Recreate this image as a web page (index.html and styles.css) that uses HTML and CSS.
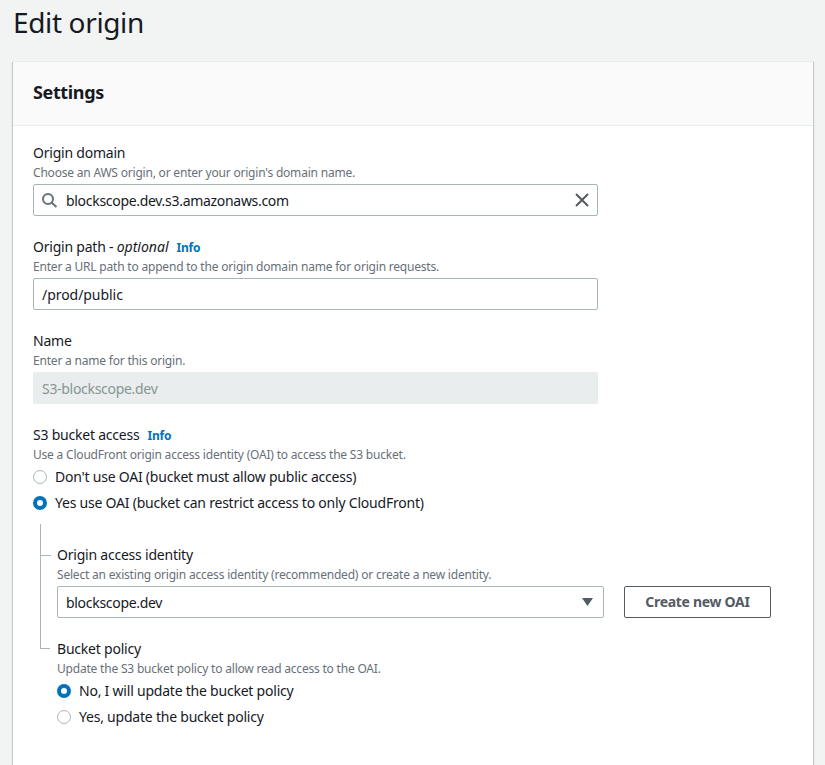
FILE: index.html
```html
<!DOCTYPE html>
<html lang="en">
<head>
    <meta charset="UTF-8">
    <meta name="viewport" content="width=device-width, initial-scale=1.0">
    <title>Edit origin</title>
    <link rel="stylesheet" href="styles.css">
</head>
<body>
    <h1 class="page-title">Edit origin</h1>
    <div class="card">
        <div class="card-header">
            <h2>Settings</h2>
        </div>
        <form class="card-body">
            <div class="field">
                <label class="field-label" for="originDomain">Origin domain</label>
                <p class="field-desc">Choose an AWS origin, or enter your origin's domain name.</p>
                <div class="input-box search-box">
                    <svg class="icon" width="16" height="16" viewBox="0 0 16 16" fill="none" stroke="#687078" stroke-width="2">
                        <circle cx="6" cy="7" r="5"/>
                        <path d="M9.5 10.5L14.5 15"/>
                    </svg>
                    <input type="text" id="originDomain" value="blockscope.dev.s3.amazonaws.com">
                    <svg class="icon" width="16" height="16" viewBox="0 0 16 16" fill="none" stroke="#545b64" stroke-width="2">
                        <path d="M2 2L14 14M14 2L2 14"/>
                    </svg>
                </div>
            </div>

            <div class="field">
                <label class="field-label" for="originPath">Origin path - <i>optional</i><a class="info-link" href="#">Info</a></label>
                <p class="field-desc">Enter a URL path to append to the origin domain name for origin requests.</p>
                <div class="input-box path-box">
                    <input type="text" id="originPath" value="/prod/public">
                </div>
            </div>

            <div class="field">
                <label class="field-label" for="originName">Name</label>
                <p class="field-desc">Enter a name for this origin.</p>
                <div class="input-box is-disabled">
                    <input type="text" id="originName" value="S3-blockscope.dev" disabled>
                </div>
            </div>

            <div class="field">
                <div class="field-label">S3 bucket access<a class="info-link" href="#">Info</a></div>
                <p class="field-desc">Use a CloudFront origin access identity (OAI) to access the S3 bucket.</p>
                <label class="radio-row"><input type="radio" name="access"> Don't use OAI (bucket must allow public access)</label>
                <label class="radio-row"><input type="radio" name="access" checked> Yes use OAI (bucket can restrict access to only CloudFront)</label>

                <div class="tree">
                    <div class="tree-row tree-row-first">
                        <div class="tree-line"><div class="tree-stub"></div></div>
                        <div class="tree-content">
                            <label class="field-label" for="oai">Origin access identity</label>
                            <p class="field-desc">Select an existing origin access identity (recommended) or create a new identity.</p>
                            <div class="select-row">
                                <div class="input-box select-box">
                                    <span class="select-value" id="oai">blockscope.dev</span>
                                    <svg width="11" height="8" viewBox="0 0 11 8"><path d="M0 0H11L5.5 8Z" fill="#545b64"/></svg>
                                </div>
                                <button type="button" class="btn">Create new OAI</button>
                            </div>
                        </div>
                    </div>
                    <div class="tree-row tree-row-last">
                        <div class="tree-line"><div class="tree-stub"></div></div>
                        <div class="tree-content">
                            <div class="field-label">Bucket policy</div>
                            <p class="field-desc">Update the S3 bucket policy to allow read access to the OAI.</p>
                            <label class="radio-row"><input type="radio" name="policy" checked> No, I will update the bucket policy</label>
                            <label class="radio-row"><input type="radio" name="policy"> Yes, update the bucket policy</label>
                        </div>
                    </div>
                </div>
            </div>
        </form>
    </div>
</body>
</html>
```

FILE: styles.css
```css
body {
    font-family: "Noto Sans", Arial, sans-serif;
    font-size: 14px;
    line-height: 22px;
    letter-spacing: -0.22px;
    color: #16191f;
    background-color: #f2f3f3;
    margin: 0;
    padding: 0 12px 0 13px;
    height: 765px;
    overflow: hidden;
}

.page-title {
    font-size: 28px;
    font-weight: 400;
    line-height: 36px;
    letter-spacing: -0.36px;
    margin: 0;
    padding: 4px 0 21px 0;
}

.card {
    background-color: #fff;
    box-shadow: 0 1px 1px 0 rgba(0, 28, 36, 0.3), 1px 1px 1px 0 rgba(0, 28, 36, 0.15), -1px 1px 1px 0 rgba(0, 28, 36, 0.15);
    border-top: 1px solid #eaeded;
    padding-bottom: 60px;
}

.card-header {
    background-color: #fafafa;
    border-bottom: 1px solid #eaeded;
    padding: 18px 20px 21px;
}

.card-header h2 {
    font-size: 18px;
    font-weight: 700;
    line-height: 24px;
    letter-spacing: -0.37px;
    margin: 0;
}

.card-body {
    padding: 16px 20px 0;
}

.field {
    margin-bottom: 20px;
}

.field-label {
    display: block;
    height: 23px;
}

.field-label i {
    letter-spacing: 0;
}

.field-desc {
    font-size: 12px;
    line-height: 16px;
    letter-spacing: -0.2px;
    color: #687078;
    margin: 0 0 3px;
}

.info-link {
    font-size: 12px;
    font-weight: 700;
    color: #0073bb;
    text-decoration: none;
    margin-left: 8px;
}

.input-box {
    display: flex;
    align-items: center;
    box-sizing: border-box;
    width: 565px;
    height: 32px;
    padding: 0 8px;
    background-color: #fff;
    border: 1px solid #aab7b8;
    border-radius: 2px;
    letter-spacing: -0.3px;
}

.input-box input {
    flex: 1;
    min-width: 0;
    border: none;
    padding: 2px 0 0;
    outline: none;
    background: transparent;
    font: inherit;
    color: inherit;
    letter-spacing: inherit;
}

.path-box {
    letter-spacing: -0.05px;
}

.search-box {
    padding-right: 7px;
}

.search-box input {
    margin: 0 8px 0 8px;
}

.is-disabled {
    background-color: #eaeded;
    border-color: #eaeded;
}

.is-disabled input {
    color: #879596;
}

.icon {
    flex: none;
}

.radio-row {
    display: flex;
    align-items: center;
    gap: 8px;
    height: 22px;
    margin-bottom: 4px;
}

.radio-row input {
    appearance: none;
    flex: none;
    box-sizing: border-box;
    width: 14px;
    height: 14px;
    margin: 0;
    background-color: #fff;
    border: 1.5px solid #aab7b8;
    border-radius: 50%;
}

.radio-row input:checked {
    border: 4.5px solid #0073bb;
}

.tree {
    margin: 10px 0 0 7px;
}

.tree-row {
    display: flex;
}

.tree-line {
    flex: none;
    width: 17px;
}

.tree-stub {
    box-sizing: border-box;
    width: 10px;
    border-bottom: 1px solid #aab7b8;
}

.tree-row-first .tree-line {
    box-sizing: border-box;
    border-left: 1px solid #aab7b8;
}

.tree-row-first .tree-stub {
    height: 32px;
}

.tree-row-last .tree-stub {
    height: 11px;
    border-left: 1px solid #aab7b8;
}

.tree-row-first .tree-content {
    padding: 20px 0 20px;
}

.tree-content {
    flex: 1;
}

.select-row {
    display: flex;
    gap: 20px;
}

.select-box {
    width: 547px;
    justify-content: space-between;
    padding-right: 10px;
}

.select-value {
    padding-top: 2px;
}

.btn {
    box-sizing: border-box;
    width: 147px;
    height: 32px;
    padding: 0;
    background-color: #fff;
    border: 1px solid #545b64;
    border-radius: 2px;
    color: #545b64;
    font: inherit;
    font-weight: 700;
    letter-spacing: -0.3px;
}
```
